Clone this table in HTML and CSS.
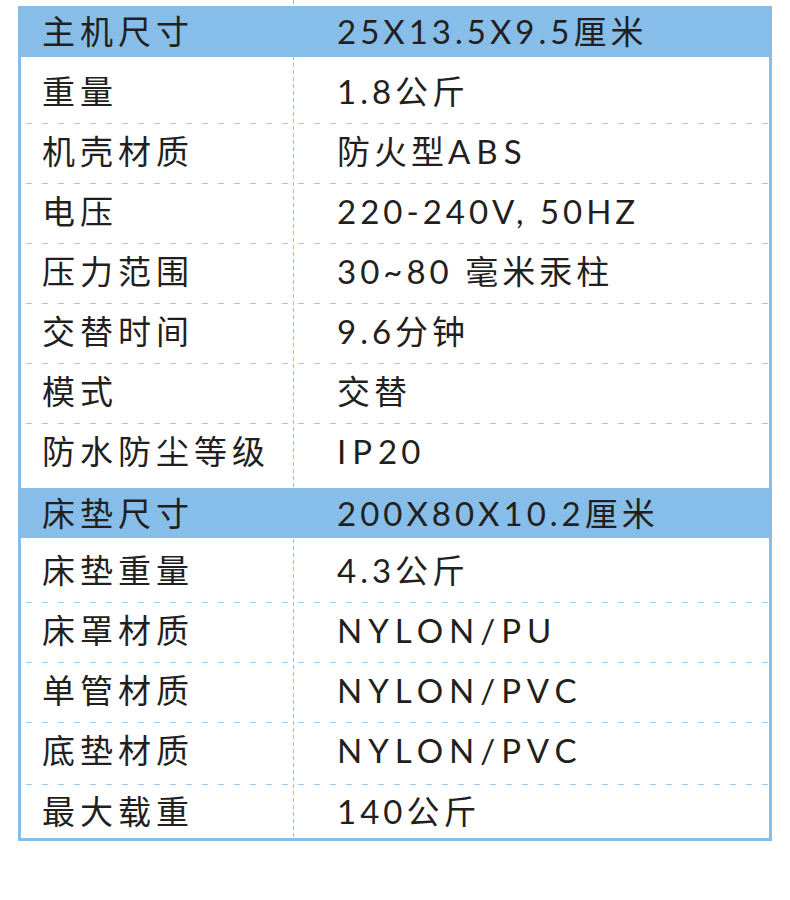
FILE: index.html
```html
<!DOCTYPE html>
<html lang="zh-CN">
<head>
<meta charset="utf-8">
<title>规格参数</title>
<link rel="stylesheet" href="styles.css">
</head>
<body>
<div class="page">
  <div class="spec">
    <div class="row band band1"><div class="k">主机尺寸</div><div class="v">25X13.5X9.5厘米</div></div>
    <div class="group g1">
      <div class="row"><div class="k">重量</div><div class="v">1.8公斤</div></div>
      <div class="row"><div class="k">机壳材质</div><div class="v">防火型<span class="caps">ABS</span></div></div>
      <div class="row"><div class="k">电压</div><div class="v">220-240V, 50HZ</div></div>
      <div class="row"><div class="k">压力范围</div><div class="v">30~80 毫米汞柱</div></div>
      <div class="row"><div class="k">交替时间</div><div class="v">9.6分钟</div></div>
      <div class="row"><div class="k">模式</div><div class="v">交替</div></div>
      <div class="row last"><div class="k">防水防尘等级</div><div class="v"><span class="caps">IP</span>20</div></div>
    </div>
    <div class="row band band2"><div class="k">床垫尺寸</div><div class="v">200X80X10.2厘米</div></div>
    <div class="group g2">
      <div class="row"><div class="k">床垫重量</div><div class="v">4.3公斤</div></div>
      <div class="row"><div class="k">床罩材质</div><div class="v caps">NYLON/PU</div></div>
      <div class="row"><div class="k">单管材质</div><div class="v caps">NYLON/PVC</div></div>
      <div class="row tall"><div class="k">底垫材质</div><div class="v caps">NYLON/PVC</div></div>
      <div class="row last end"><div class="k">最大载重</div><div class="v">140公斤</div></div>
    </div>
  </div>
</div>
</body>
</html>
```

FILE: styles.css
```css
html, body {
  margin: 0;
  padding: 0;
  background: #ffffff;
}

body {
  font-family: "Lato", "Noto Sans CJK SC", sans-serif;
  color: #231f20;
}

.page {
  margin-left: 18px;
  width: 754px;
  padding-top: 6px;
  background: repeating-linear-gradient(to bottom, #8fc3ec 0 4px, transparent 4px 7px) 275px 0 / 1px 100% no-repeat;
}

.spec {
  border: 3px solid #86bde9;
  border-top: 0;
}

.row {
  display: grid;
  grid-template-columns: 272px 1fr;
  height: 60px;
  box-sizing: border-box;
  padding-bottom: 6px;
  align-items: center;
  font-size: 33px;
  letter-spacing: 4px;
  line-height: 1;
  background: repeating-linear-gradient(to right, transparent 0 5px, #9ccbef 5px 11px, transparent 11px 16px) 0 100% / 100% 1px no-repeat;
}

.row.last {
  background: none;
}

.row.tall {
  height: 62px;
  padding-bottom: 8px;
}

.row.end {
  height: 53px;
  padding-bottom: 0;
}

.k {
  padding-left: 21px;
  letter-spacing: 5px;
}

.v {
  padding-left: 44px;
}

.caps {
  letter-spacing: 6px;
}

.band {
  background: #86bde9;
  margin: 0 -3px;
  padding: 0 3px;
}

.band1 {
  height: 51px;
}

.band2 {
  height: 50px;
  margin-top: 4px;
}

.g1 {
  margin-top: 7px;
}

.g2 {
  margin-top: 5px;
}
```
